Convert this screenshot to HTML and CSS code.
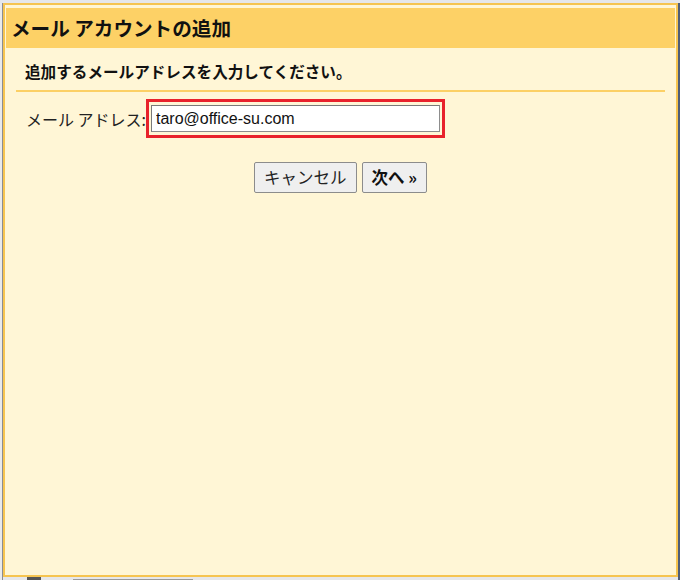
FILE: index.html
```html
<!DOCTYPE html>
<html lang="ja">
<head>
<meta charset="utf-8">
<title>メール アカウントの追加</title>
<link rel="stylesheet" href="styles.css">
</head>
<body>
<div class="screen">
  <div class="leftbar"></div>
  <div class="column">
    <div class="dialog">
      <div class="header">メール アカウントの追加</div>
      <div class="content">
        <p class="lead">追加するメールアドレスを入力してください。</p>
        <div class="rule"></div>
        <div class="field">
          <label class="label" for="addr">メール アドレス:</label>
          <div class="highlight">
            <input id="addr" class="input" type="text" value="taro@office-su.com">
          </div>
        </div>
        <div class="actions">
          <button class="btn">キャンセル</button>
          <button class="btn btn-primary">次へ »</button>
        </div>
      </div>
    </div>
    <div class="behind">
      <span class="behind-icon"></span>
      <span class="behind-line"></span>
    </div>
  </div>
  <div class="rightbar"></div>
</div>
</body>
</html>
```
FILE: styles.css
```css
* { box-sizing: border-box; }
html, body {
  margin: 0;
  padding: 0;
  height: 580px;
  overflow: hidden;
  background: #e6e7ea;
  font-family: "Noto Sans CJK JP", "Liberation Sans", sans-serif;
  color: #1a1a1a;
}
.screen {
  display: flex;
  height: 580px;
  padding-top: 3px;
}
.leftbar {
  width: 3px;
  border-right: 1px solid #8a8d94;
  background: #e9eaec;
}
.rightbar {
  width: 2px;
  background: #4f5d78;
}
.column {
  flex: 1;
  display: flex;
  flex-direction: column;
  overflow: hidden;
}
.dialog {
  height: 574px;
  border: 2px solid #f6c450;
  padding: 3px 1px 1px 1px;
  background: #fff6d6;
  display: flex;
  flex-direction: column;
}
.header {
  height: 40px;
  background: #fdd166;
  padding-left: 5px;
  font-size: 19.6px;
  font-weight: bold;
  line-height: 40px;
  color: #111;
}
.content {
  flex: 1;
  background: #fff6d6;
}
.lead {
  margin: 13px 0 0 19px;
  font-size: 15.6px;
  font-weight: bold;
  line-height: 20px;
  color: #111;
}
.rule {
  margin: 9px 10px 0 10px;
  height: 2px;
  background: #fcd065;
}
.field {
  display: flex;
  align-items: center;
  margin-top: 7px;
}
.label {
  width: 140px;
  text-align: right;
  font-size: 16px;
  line-height: 20px;
  color: #222;
  white-space: nowrap;
}
.highlight {
  border: 3px solid #e8222b;
  padding: 3px 2px;
}
.input {
  display: block;
  width: 289px;
  height: 27px;
  border: 1px solid #8d8d8d;
  border-top-color: #7a7a7a;
  border-left-color: #7a7a7a;
  background: #fff;
  padding: 0 4px;
  font-family: "Liberation Sans", Arial, sans-serif;
  font-size: 16px;
  color: #111;
  outline: none;
}
.actions {
  display: flex;
  justify-content: center;
  gap: 5px;
  margin-top: 24px;
}
.btn {
  height: 31px;
  padding: 0 9px;
  border: 1px solid #8c8c8c;
  border-radius: 2px;
  background: #efefef;
  font-family: "Noto Sans CJK JP", "Liberation Sans", sans-serif;
  font-size: 16.5px;
  color: #222;
  line-height: 29px;
}
.btn-primary {
  font-weight: bold;
  color: #111;
}
.behind {
  height: 3px;
  display: flex;
  align-items: flex-start;
  padding-left: 24px;
}
.behind-icon {
  width: 14px;
  height: 3px;
  background: #555;
}
.behind-line {
  margin-left: 32px;
  width: 120px;
  height: 1px;
  margin-top: 2px;
  background: #9a9a9a;
}
```
